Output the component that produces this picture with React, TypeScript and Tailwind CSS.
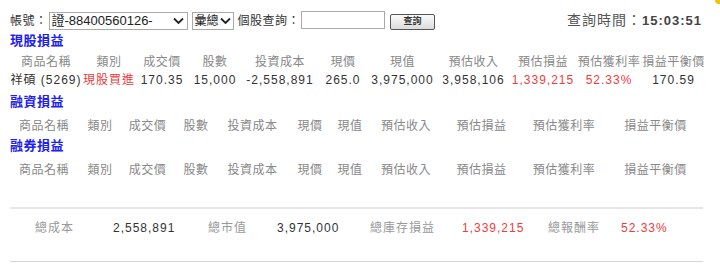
import React from 'react';

const font = { fontFamily: '"Liberation Sans", "Noto Sans CJK TC", sans-serif' };

const heads = ['商品名稱', '類別', '成交價', '股數', '投資成本', '現價', '現值', '預估收入', '預估損益', '預估獲利率', '損益平衡價'];

function Chevron() {
  return (
    <svg width="11" height="8" viewBox="0 0 11 8" className="shrink-0">
      <path d="M1 1.5 L5.5 6 L10 1.5" fill="none" stroke="#222" strokeWidth="1.8" />
    </svg>
  );
}

function Title({ children }: { children: React.ReactNode }) {
  return <div className="h-[18px] leading-[18px] text-[13px] font-semibold text-[#2020f0] tracking-[0.5px]">{children}</div>;
}

export default function App() {
  const row = [
    { v: '祥碩 (5269)', c: 'text-[#333]' },
    { v: '現股買進', c: 'text-[#ee3b3b]' },
    { v: '170.35', c: 'text-[#333]' },
    { v: '15,000', c: 'text-[#333]' },
    { v: '-2,558,891', c: 'text-[#333]' },
    { v: '265.0', c: 'text-[#333]' },
    { v: '3,975,000', c: 'text-[#333]' },
    { v: '3,958,106', c: 'text-[#333]' },
    { v: '1,339,215', c: 'text-[#f03c3c]' },
    { v: '52.33%', c: 'text-[#f03c3c]' },
    { v: '170.59', c: 'text-[#333]' },
  ];

  return (
    <div className="relative w-[720px] h-[279px] bg-white px-[10px] overflow-hidden" style={font}>
      <div className="absolute right-0 top-0 w-[5px] h-[4px] bg-[#f5c400] rounded-bl-full" />

      {/* top bar */}
      <div className="flex items-center h-[19px] mt-[11px] text-[12px] text-[#333] whitespace-nowrap">
        <span className="shrink-0 tracking-[0.5px]">帳號：</span>
        <div className="flex items-center justify-between w-[139px] shrink-0 h-[18px] border border-[#a9a9a9] ml-[1px] pl-[2px] pr-[3px]">
          <span className="text-[13px] text-[#222]">證-88400560126-</span>
          <Chevron />
        </div>
        <div className="flex items-center justify-between w-[42px] shrink-0 h-[18px] border border-[#a9a9a9] ml-[4px] pl-[2px] pr-[2px]">
          <span className="text-[12px] text-[#222]">彙總</span>
          <Chevron />
        </div>
        <span className="ml-[4px] shrink-0 tracking-[0.5px]">個股查詢：</span>
        <div className="w-[84px] shrink-0 h-[18px] border border-[#a9a9a9] -mt-[2px] ml-[1px]" />
        <div className="ml-[5px] mt-[3px] w-[45px] shrink-0 h-[16px] border border-[#555] rounded-[2px] bg-gradient-to-b from-[#fafafa] to-[#dcdcdc] flex items-center justify-center text-[9px] font-bold text-[#333]">
          查詢
        </div>
        <div className="ml-auto pr-[8px] flex items-center">
          <span className="text-[14px] text-[#555] tracking-[1px]">查詢時間：</span>
          <span className="text-[13px] font-bold text-[#444] tracking-[1px]">15:03:51</span>
        </div>
      </div>

      <div className="mt-[2px]">
        <Title>現股損益</Title>
      </div>
      <div className="grid grid-cols-[72px_54px_52px_54px_76px_50px_69px_73px_66px_66px_63px] mt-[3px] text-[12px] tracking-[0.5px] text-center">
        {heads.map((h) => (
          <div key={h} className="h-[18px] leading-[18px] text-[#888] whitespace-nowrap">{h}</div>
        ))}
        {row.map((r, i) => (
          <div key={i} className={`h-[18px] leading-[18px] whitespace-nowrap tracking-[1px] ${r.c}`}>{r.v}</div>
        ))}
      </div>

      <div className="mt-[4px]">
        <Title>融資損益</Title>
      </div>
      <div className="grid grid-cols-[68px_44px_51px_46px_67px_48px_32px_80px_71px_94px_89px] mt-[6px] text-[12px] tracking-[0.5px] text-center">
        {heads.map((h) => (
          <div key={h} className="h-[18px] leading-[18px] text-[#888] whitespace-nowrap">{h}</div>
        ))}
      </div>

      <div className="mt-[2px]">
        <Title>融券損益</Title>
      </div>
      <div className="grid grid-cols-[68px_44px_51px_46px_67px_48px_32px_80px_71px_94px_89px] mt-[6px] text-[12px] tracking-[0.5px] text-center">
        {heads.map((h) => (
          <div key={h} className="h-[18px] leading-[18px] text-[#888] whitespace-nowrap">{h}</div>
        ))}
      </div>

      {/* totals */}
      <div className="w-[693px] mt-[28px]">
        <div className="h-[2px] bg-[#e6e6e6]" />
        <div className="grid grid-cols-[78px_95px_69px_93px_92px_86px_73px_1fr] pl-[25px] mt-[10px] h-[18px] leading-[18px] text-[12px] whitespace-nowrap">
          <span className="text-[#999] tracking-[1px]">總成本</span>
          <span className="text-[#333] tracking-[1px]">2,558,891</span>
          <span className="text-[#999] tracking-[1px]">總市值</span>
          <span className="text-[#333] tracking-[1px]">3,975,000</span>
          <span className="text-[#999] tracking-[1px]">總庫存損益</span>
          <span className="text-[#f03c3c] tracking-[1px]">1,339,215</span>
          <span className="text-[#999] tracking-[1px]">總報酬率</span>
          <span className="text-[#f03c3c] tracking-[1px]">52.33%</span>
        </div>
        <div className="h-[1px] bg-[#d6d6d6] mt-[24px]" />
      </div>
    </div>
  );
}
